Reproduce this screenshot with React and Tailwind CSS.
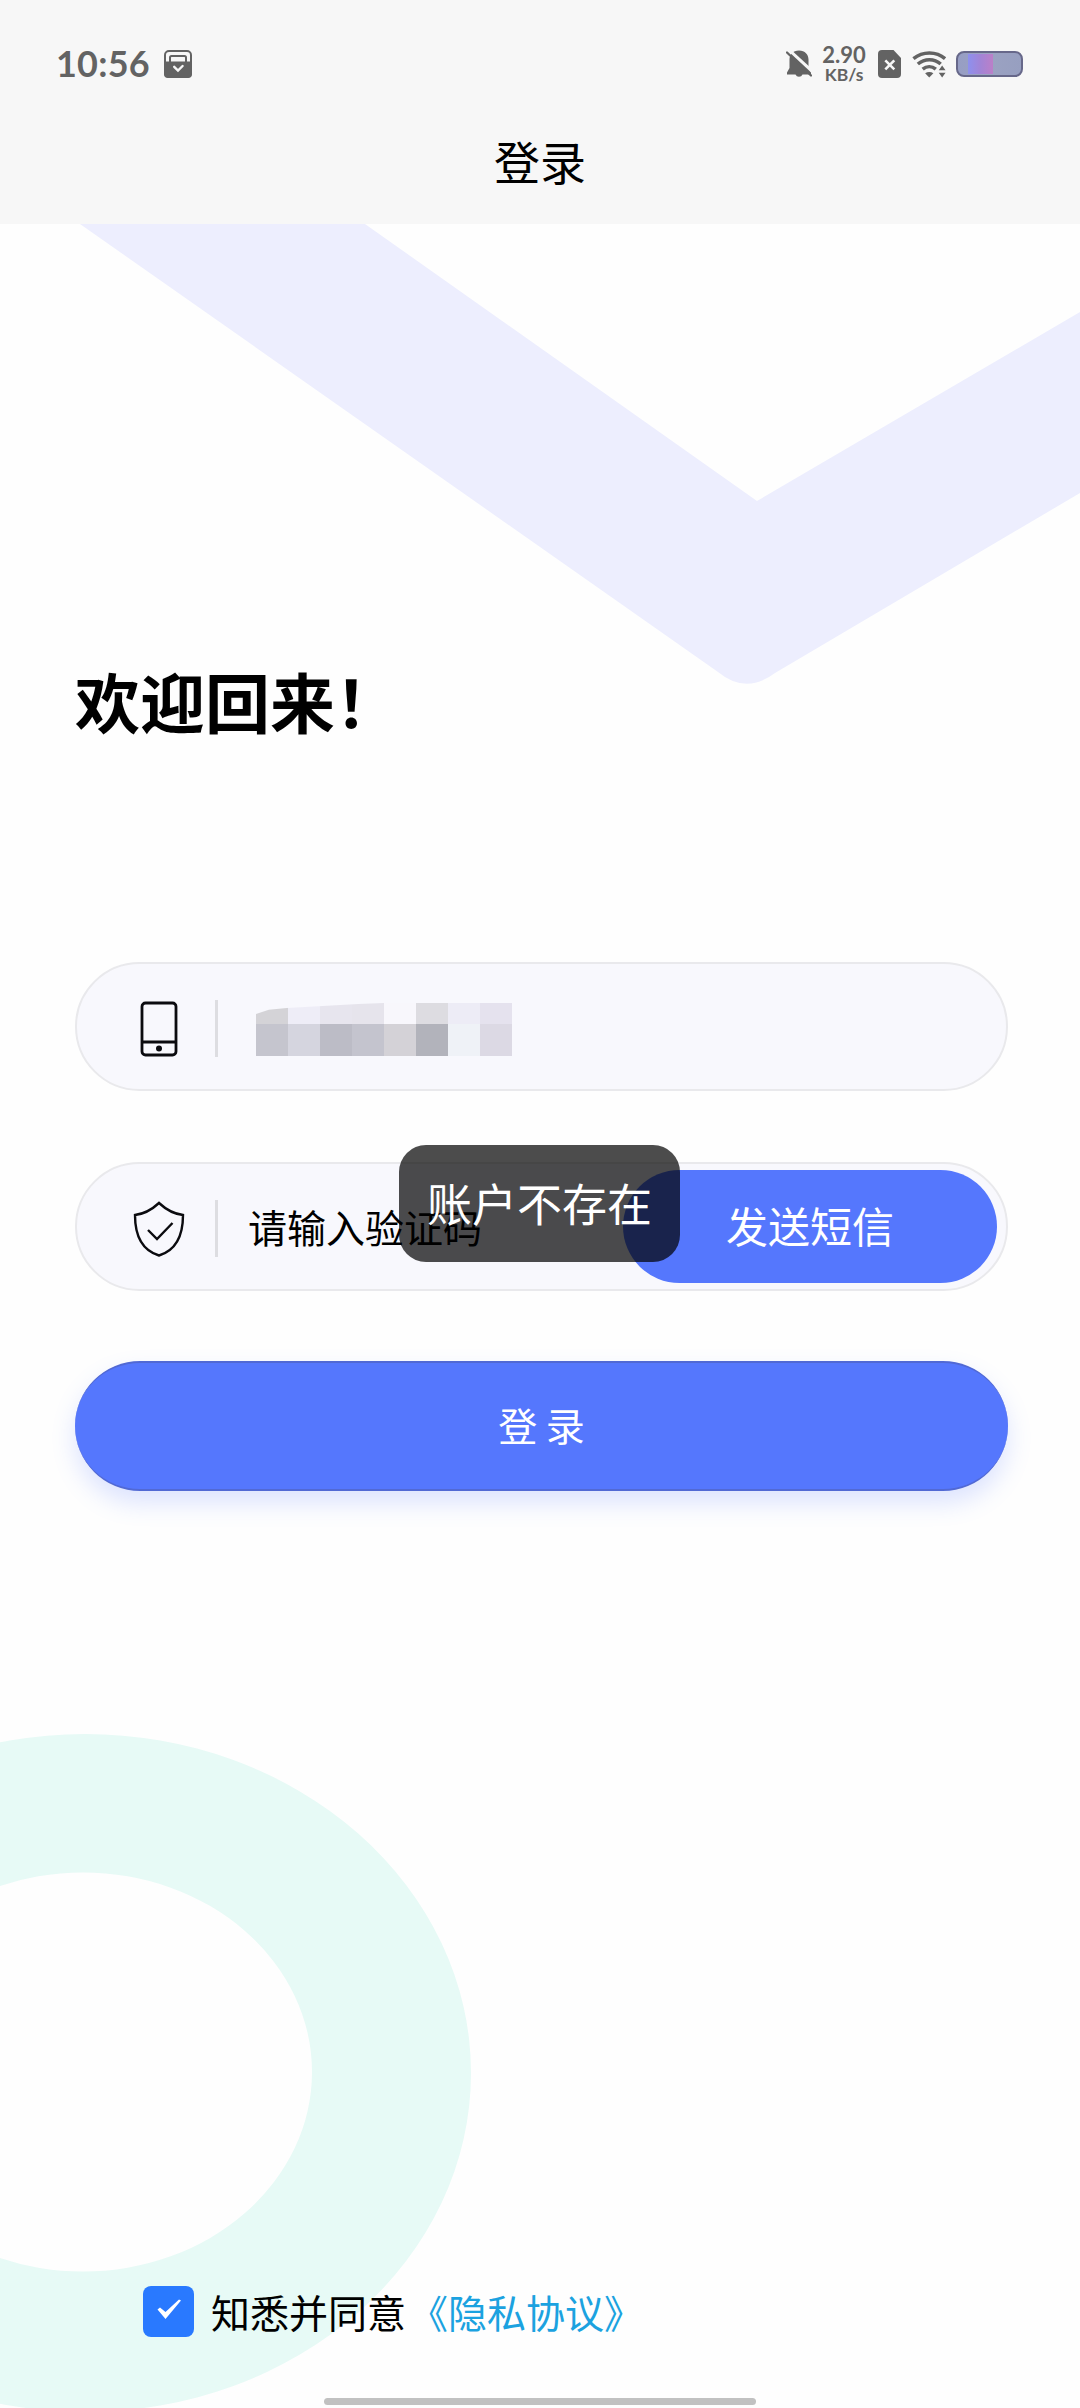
import React from 'react';

const MOSAIC_TOP = ['#d4d3d7', '#eeedf7', '#e7e5ee', '#e6e4ec', '#f8f7fc', '#dddce1', '#edecf6', '#e5e2ee'];
const MOSAIC_BOTTOM = ['#c5c5ce', '#d5d5df', '#bcbcc6', '#c4c4ce', '#d4d2d7', '#b2b3bb', '#eff2f7', '#dcd9e4'];

const StatusBar = () => (
  <div className="flex h-[100px] items-start justify-between pl-14 pr-[57px] text-[#636363]">
    <div className="flex items-center pt-[41px]">
      <span className="w-[108px] pb-px font-['Lato'] text-[36px] font-bold leading-[44px] tracking-[0.2px]">10:56</span>
      <svg className="size-7" viewBox="0 0 28 28" fill="none">
        <rect x="1" y="1" width="26" height="26" rx="4" stroke="currentColor" strokeWidth="2" />
        <path d="M0 11.5h28V24a4 4 0 0 1-4 4H4a4 4 0 0 1-4-4z" fill="currentColor" />
        <path d="M6 12V7.5A1.5 1.5 0 0 1 7.5 6h13A1.5 1.5 0 0 1 22 7.5V12" stroke="currentColor" strokeWidth="2" />
        <path d="m10.2 16.8 3.8 3.7 4.6-4.5" stroke="#f7f7f7" strokeWidth="2.4" strokeLinecap="round" />
      </svg>
    </div>

    <div className="flex items-center pt-[44px]">
      <svg className="h-[28px] w-[26px]" viewBox="0 0 26 28" fill="none">
        <path d="M13 0.5c6 0 9.5 4 9.5 9v8.5l2.5 4.5v2H16.5a3.8 3.8 0 0 1-7 0H1v-2l2.5-4.5V9.5c0-5 3.5-9 9.5-9z" fill="currentColor" />
        <path d="M2 -1 28 23" stroke="#f7f7f7" strokeWidth="3" />
        <path d="M1 2.5 25 25.5" stroke="currentColor" strokeWidth="2.3" strokeLinecap="round" />
      </svg>
      <div className="ml-[10px] w-[44px] text-center font-['Lato'] font-bold">
        <div className="text-[22px] leading-[21px]">2.90</div>
        <div className="text-[17.5px] leading-[19px]">KB/s</div>
      </div>
      <svg className="ml-[12px] h-[28px] w-[23px]" viewBox="0 0 23 28" fill="none">
        <path d="M4 0h11.5L23 8v16a4 4 0 0 1-4 4H4a4 4 0 0 1-4-4V4a4 4 0 0 1 4-4z" fill="currentColor" />
        <path d="m7.3 10.3 9 9m0-9-9 9" stroke="#f7f7f7" strokeWidth="2.6" />
      </svg>
      <svg className="ml-[11px] h-[28px] w-[35px]" viewBox="0 0 36 28" fill="none">
        <g stroke="currentColor" strokeWidth="3.6">
          <path d="M1.5 8.5C11 .8 25 .8 34 8.5" />
          <path d="M6 14c7-6 17-6 23.500 0" />
          <path d="M11 19.3c4-3.400 9.500-3.400 13.500 0" />
        </g>
        <path d="M13.5 23.5c2.500-1.800 6-1.800 8.500 0L17.700 28z" fill="currentColor" />
        <path d="m31 15.5 3.5 5h-7zM31 28l3.5-5h-7z" fill="currentColor" />
      </svg>
      <div className="ml-[9px] h-[26px] w-[67px] rounded-[8px] border-[2.5px] border-[#67688a] bg-linear-to-r from-[#979ec4] via-[#9ba2c2] to-[#979fc0] p-px">
        <div className="ml-[9px] h-full w-[25px] bg-linear-to-r from-[#8d90ee] via-[#a284d6] to-[#bb7fc8]" />
      </div>
    </div>
  </div>
);

const Backdrop = () => (
  <svg className="absolute inset-0 h-[2408px] w-[1080px]" viewBox="0 0 1080 2408" fill="none">
    <path d="M80 224H365L757 501L1080 312V493L775 673Q746 695 718 672Z" fill="#edeefe" />
    <path
      fillRule="evenodd"
      d="M-301 2073a386 339 0 1 0 772 0a386 339 0 1 0-772 0zM-146 2072a229 199.5 0 1 0 458 0a229 199.5 0 1 0-458 0z"
      fill="#e7faf6"
    />
  </svg>
);

const PhoneIcon = () => (
  <svg className="h-[56px] w-[38px]" viewBox="0 0 38 56" fill="none" stroke="#0b0b0f" strokeWidth="2.8">
    <rect x="2" y="2" width="34" height="52" rx="3.5" />
    <path d="M2 41h34" />
    <circle cx="19" cy="47.5" r="3" fill="#0b0b0f" stroke="none" />
  </svg>
);

const ShieldIcon = () => (
  <svg className="h-[56px] w-[52px]" viewBox="0 0 52 56" fill="none" stroke="#0b0b0f" strokeWidth="2.4">
    <path d="M26 2C19 8.5 11 13 2 14C2 34 8 49 26 54.5C44 49 50 34 50 14C41 13 33 8.5 26 2Z" />
    <path d="m15 29 9 9 15.5-16" />
  </svg>
);

const Field = ({ icon, children }) => (
  <div className="flex h-[129px] items-center rounded-full border-2 border-[#e9e9ec] bg-[#f8f8fd] pr-[9px]">
    <div className="flex w-[138px] shrink-0 justify-center pl-[26px] pt-[4px]">{icon}</div>
    <div className="mt-[4px] h-[57px] w-[3px] bg-[#dddde1]" />
    {children}
  </div>
);

const App = () => {
  return (
    <div className="relative h-[2408px] w-[1080px] overflow-hidden bg-[#fefefe] font-['Noto_Sans_CJK_SC',sans-serif] text-black">
      <Backdrop />

      <div className="relative flex h-full flex-col">
        <header className="h-[224px] bg-[#f7f7f7]">
          <StatusBar />
          <h1 className="pt-[27px] text-center text-[46px] leading-[66px]">登录</h1>
        </header>

        <main className="pl-[75px] pr-[72px]">
          <h2 className="mt-[428px] text-[65px] font-bold leading-[96px]">欢迎回来！</h2>

          <div className="mt-[214px] flex flex-col gap-[71px]">
            <Field icon={<PhoneIcon />}>
              <div className="ml-[38px] mt-[6px]">
                <div
                  className="flex h-[21px]"
                  style={{ clipPath: 'polygon(0 52%, 5% 32%, 12% 24%, 40% 5%, 50% 0, 100% 0, 100% 100%, 0 100%)' }}
                >
                  {MOSAIC_TOP.map((color, i) => (
                    <div key={i} className="w-8" style={{ backgroundColor: color }} />
                  ))}
                </div>
                <div className="flex h-8">
                  {MOSAIC_BOTTOM.map((color, i) => (
                    <div key={i} className="w-8" style={{ backgroundColor: color }} />
                  ))}
                </div>
              </div>
            </Field>

            <Field icon={<ShieldIcon />}>
              <span className="ml-[30px] flex-1 pb-[2px] text-[39px] leading-[58px]">请输入验证码</span>
              <button className="h-[113px] w-[374px] rounded-full bg-[#5577fd] pb-[3px] text-[42px] leading-[60px] text-white">
                发送短信
              </button>
            </Field>
          </div>

          <button className="mt-[70px] h-[130px] w-full rounded-full border-y-2 border-[#5169d4] bg-[#5577fd] pb-[3px] text-[39px] text-white shadow-[0_12px_24px_rgba(85,119,253,0.2)]">
            登 录
          </button>
        </main>

        <footer className="mt-auto">
          <div className="ml-[143px] flex items-center text-[39px] leading-[58px]">
            <div className="flex size-[51px] items-center justify-center rounded-[8px] bg-[#2979ff] pb-1">
              <svg className="h-[22px] w-[26px]" viewBox="0 0 26 22" fill="#fff">
                <path d="M1.5 11.5 4 9.5 9.5 14 23 1.5 25 2.5 9.5 21z" />
              </svg>
            </div>
            <span className="ml-[17px]">知悉并同意</span>
            <span className="ml-[3px] text-[#1ba2e0]">《隐私协议》</span>
          </div>
          <div className="mx-auto mb-[3px] mt-[58px] h-[7px] w-[432px] rounded-full bg-[#c1c1c1]" />
        </footer>
      </div>

      {/* toast */}
      <div className="absolute left-[399px] top-[1145px] flex h-[117px] w-[281px] items-center justify-center rounded-[27px] bg-black/70 pb-[2px] text-[45px] text-white">
        账户不存在
      </div>
    </div>
  );
};

export default App;
